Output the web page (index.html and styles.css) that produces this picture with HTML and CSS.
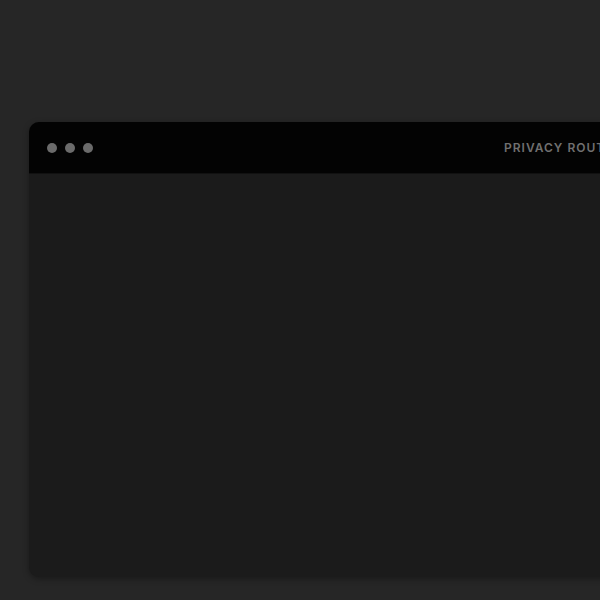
FILE: index.html
```html
<!DOCTYPE html>
<html lang="en">
<head>
    <meta charset="UTF-8">
    <meta name="viewport" content="width=device-width, initial-scale=1.0">
    <title>Privacy Router</title>
    <link rel="stylesheet" href="styles.css">
</head>
<body>
    <div class="stage">
        <div class="window">
            <div class="window-bar">
                <div class="dots">
                    <span class="dot"></span>
                    <span class="dot"></span>
                    <span class="dot"></span>
                </div>
                <span class="window-title">PRIVACY ROUTER</span>
            </div>
            <div class="window-body"></div>
        </div>
    </div>
</body>
</html>
```

FILE: styles.css
```css
html, body{
    margin: 0;
    height: 100%;
    background-color: #262626;
    overflow: hidden;
}
.stage{
    padding: 122px 0 0 29px;
}
.window{
    width: 720px;
    height: 455px;
    display: flex;
    flex-direction: column;
    background-color: #1b1b1b;
    border-radius: 10px;
    overflow: hidden;
    box-shadow: 0 2px 6px rgba(0, 0, 0, 0.35);
}
.window-bar{
    height: 51px;
    display: flex;
    align-items: center;
    padding: 0 18px;
    background-color: #030303;
    border-bottom: 1px solid #111;
}
.dots{
    display: flex;
    gap: 8px;
}
.dot{
    width: 10px;
    height: 10px;
    border-radius: 50%;
    background-color: #6b6b6b;
}
.window-title{
    margin-left: 411px;
    font-family: Inter, "Liberation Sans", Arial, sans-serif;
    font-size: 12px;
    font-weight: 600;
    letter-spacing: 1px;
    color: #707070;
    white-space: nowrap;
}
.window-body{
    flex: 1;
}
```
